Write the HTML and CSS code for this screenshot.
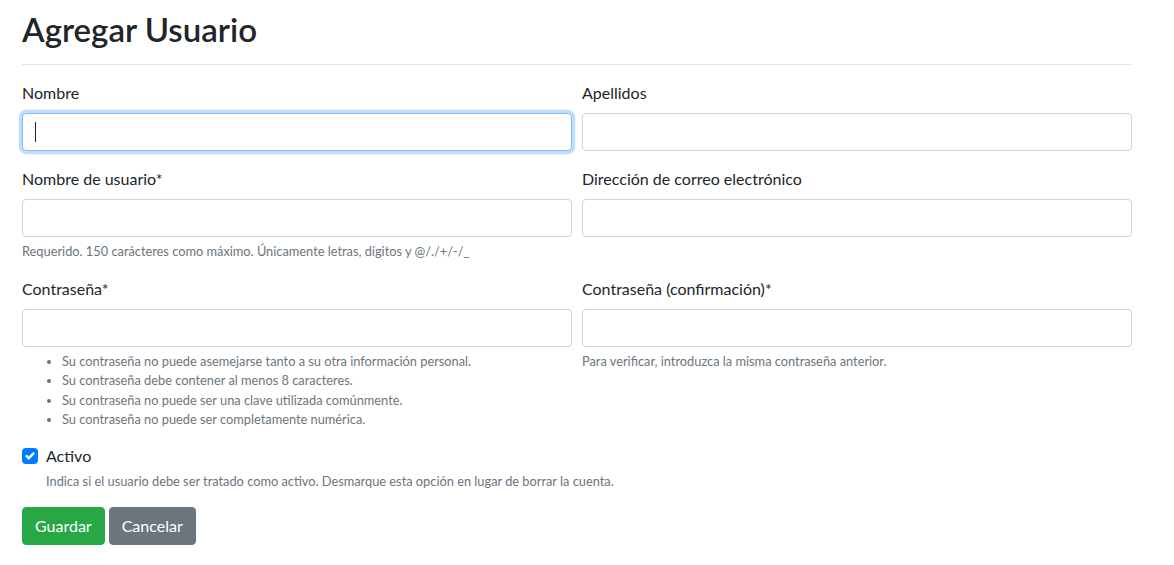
FILE: index.html
```html
<!DOCTYPE html>
<html lang="es">
<head>
<meta charset="utf-8">
<title>Agregar Usuario</title>
<link rel="stylesheet" href="styles.css">
</head>
<body>
<div class="page">
  <h1 class="title">Agregar Usuario</h1>
  <hr class="rule">
  <form class="form">
    <div class="grid">
      <div class="field">
        <label class="label">Nombre</label>
        <div class="input-wrap">
          <input class="input is-focused" type="text">
          <span class="caret"></span>
        </div>
      </div>
      <div class="field">
        <label class="label">Apellidos</label>
        <input class="input" type="text">
      </div>
      <div class="field">
        <label class="label">Nombre de usuario*</label>
        <input class="input" type="text">
        <small class="help">Requerido. 150 carácteres como máximo. Únicamente letras, dígitos y @/./+/-/_</small>
      </div>
      <div class="field">
        <label class="label">Dirección de correo electrónico</label>
        <input class="input" type="text">
      </div>
      <div class="field">
        <label class="label">Contraseña*</label>
        <input class="input" type="password">
        <small class="help">
          <ul class="help-list">
            <li>Su contraseña no puede asemejarse tanto a su otra información personal.</li>
            <li>Su contraseña debe contener al menos 8 caracteres.</li>
            <li>Su contraseña no puede ser una clave utilizada comúnmente.</li>
            <li>Su contraseña no puede ser completamente numérica.</li>
          </ul>
        </small>
      </div>
      <div class="field">
        <label class="label">Contraseña (confirmación)*</label>
        <input class="input" type="password">
        <small class="help">Para verificar, introduzca la misma contraseña anterior.</small>
      </div>
    </div>
    <div class="check">
      <div class="check-row">
        <span class="check-box">
          <svg width="10" height="10" viewBox="0 0 8 8"><path fill="#fff" d="M6.564.75l-3.59 3.612-1.538-1.55L0 4.26l2.974 2.99L8 2.193z"/></svg>
        </span>
        <span class="check-label">Activo</span>
      </div>
      <small class="help check-help">Indica si el usuario debe ser tratado como activo. Desmarque esta opción en lugar de borrar la cuenta.</small>
    </div>
    <div class="actions">
      <button type="button" class="btn btn-success">Guardar</button>
      <button type="button" class="btn btn-secondary">Cancelar</button>
    </div>
  </form>
</div>
</body>
</html>
```
FILE: styles.css
```css
* { box-sizing: border-box; }
body {
  margin: 0;
  background: #fff;
  color: #212529;
  font-family: "Lato", "Open Sans", sans-serif;
  font-size: 16px;
  line-height: 1.5;
}
.page {
  padding: 10px 42px 0 22px;
}
.title {
  margin: 0 0 14.4px;
  font-size: 33px;
  line-height: 1.2;
  font-weight: 600;
}
.rule {
  margin: 0 0 16px;
  border: 0;
  border-top: 1px solid rgba(0,0,0,.1);
}
.grid {
  display: grid;
  grid-template-columns: 1fr 1fr;
  column-gap: 10px;
  row-gap: 16px;
}
.field {
  display: flex;
  flex-direction: column;
}
.label {
  display: block;
  margin-bottom: 8px;
  line-height: 24px;
}
.input-wrap { position: relative; }
.input {
  display: block;
  width: 100%;
  height: 38px;
  padding: 6px 12px;
  font: inherit;
  color: #495057;
  background: #fff;
  border: 1px solid #ced4da;
  border-radius: 4px;
  outline: none;
}
.input.is-focused {
  border-color: #80bdff;
  box-shadow: 0 0 0 3.2px rgba(0,123,255,.25);
}
.caret {
  position: absolute;
  left: 13px;
  top: 9px;
  width: 1px;
  height: 20px;
  background: #212529;
}
.help {
  display: block;
  margin-top: 5px;
  font-size: 12.8px;
  line-height: 19.2px;
  color: #6c757d;
}
.help-list {
  margin: 0;
  padding-left: 40px;
}
.check {
  margin-top: 15px;
  padding-left: 24px;
  position: relative;
}
.check-row {
  line-height: 24px;
}
.check-box {
  position: absolute;
  left: 0;
  top: 4px;
  width: 16px;
  height: 16px;
  border-radius: 4px;
  background: #007bff;
  display: flex;
  align-items: center;
  justify-content: center;
}
.check-help { margin-top: 4px; }
.actions {
  margin-top: 16px;
  display: flex;
  gap: 4px;
}
.btn {
  height: 38px;
  padding: 6px 12px;
  font: inherit;
  line-height: 24px;
  color: #fff;
  border: 1px solid transparent;
  border-radius: 4px;
}
.btn-success { background: #28a745; border-color: #28a745; }
.btn-secondary { background: #6c757d; border-color: #6c757d; }
```
